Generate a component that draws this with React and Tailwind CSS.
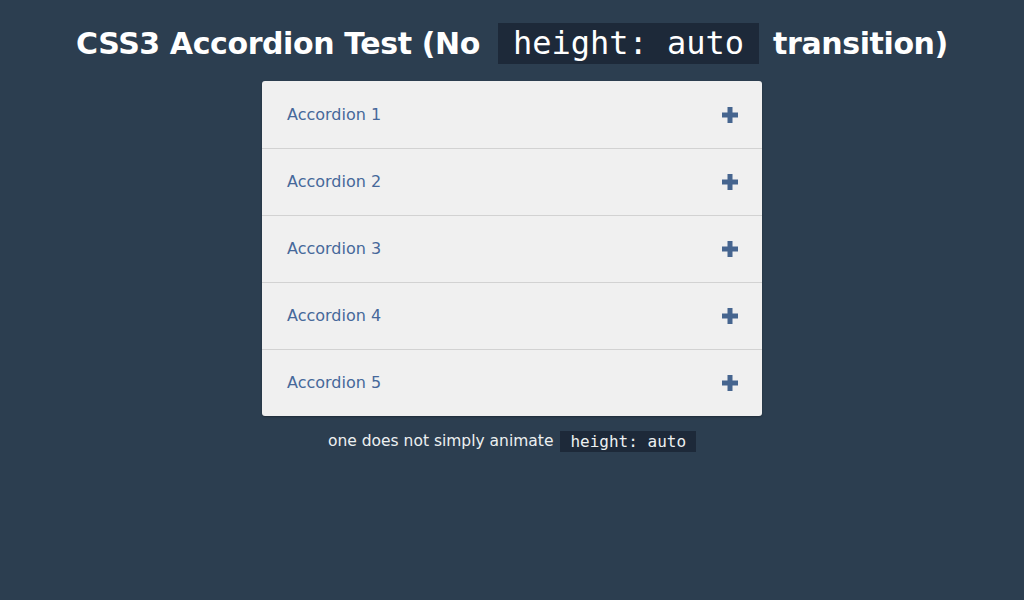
import React from 'react';

const items = ['Accordion 1', 'Accordion 2', 'Accordion 3', 'Accordion 4', 'Accordion 5'];

const Plus = () => (
  <svg width="16" height="16" viewBox="0 0 16 16" className="shrink-0">
    <rect x="0" y="5.5" width="16" height="5" fill="#46658f" />
    <rect x="5.5" y="0" width="5" height="16" fill="#46658f" />
  </svg>
);

export default function App() {
  return (
    <div className="min-h-[600px] w-full bg-[#2c3e50] font-['DejaVu_Sans',sans-serif] text-white">
      <h1 className="flex items-center justify-center pt-[23px] text-[30px] font-bold leading-[41px] tracking-[-0.4px]">
        <span>CSS3 Accordion Test (No</span>
        <code className="ml-[18px] mr-[14px] bg-[#1d2939] px-[15px] font-['DejaVu_Sans_Mono',monospace] text-[32px] font-normal leading-[41px] tracking-normal">
          height: auto
        </code>
        <span>transition)</span>
      </h1>

      <div className="mx-auto mt-[17px] w-[500px] overflow-hidden rounded-[3px] bg-[#f0f0f0] shadow-[0_1px_2px_rgba(0,0,0,0.3)]">
        {items.map((label, i) => (
          <div
            key={label}
            className={`flex h-[67px] items-center justify-between pl-[25px] pr-[24px] ${i > 0 ? 'border-t border-[#d2d2d2]' : ''}`}
          >
            <span className="text-[16px] text-[#46689a]">{label}</span>
            <Plus />
          </div>
        ))}
      </div>

      <p className="mt-[14px] flex items-center justify-center text-[15.5px] text-[#ecf0f1]">
        <span>one does not simply animate</span>
        <code className="ml-[7px] bg-[#1d2939] px-[10px] font-['DejaVu_Sans_Mono',monospace] text-[16px] leading-[21px]">
          height: auto
        </code>
      </p>
    </div>
  );
}
